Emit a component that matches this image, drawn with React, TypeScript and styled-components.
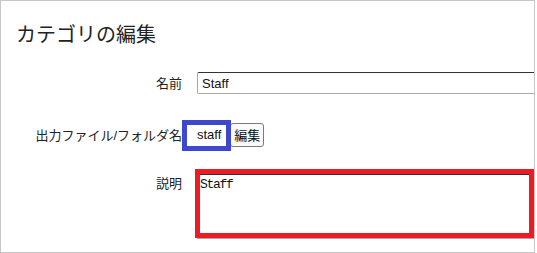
import React from "react";
import styled, { createGlobalStyle } from "styled-components";

const Global = createGlobalStyle`
  html, body { margin: 0; padding: 0; background: #fff; }
  body { font-family: "Liberation Sans", "Noto Sans CJK JP", sans-serif; }
`;

const Frame = styled.div`
  box-sizing: border-box;
  width: 535px;
  height: 253px;
  border: 1px solid #c6c6c6;
  overflow: hidden;
  padding-top: 21px;
  background: #fff;
`;

const Title = styled.h2`
  margin: 0 0 0 15px;
  font-family: "Noto Sans CJK JP", sans-serif;
  font-weight: 400;
  font-size: 20px;
  line-height: 24px;
  color: #222;
`;

const Row = styled.div<{ $top: number; $align?: string }>`
  display: grid;
  grid-template-columns: 181px 1fr;
  column-gap: 15px;
  align-items: ${(p) => p.$align ?? "center"};
  margin-top: ${(p) => p.$top}px;
`;

const Label = styled.div`
  text-align: right;
  font-family: "Liberation Sans", "Noto Sans CJK JP", sans-serif;
  font-size: 13px;
  line-height: 19px;
  color: #222;
  white-space: nowrap;
`;

const TextInput = styled.input`
  box-sizing: border-box;
  width: 380px;
  height: 22px;
  margin: 0;
  padding: 0 4px;
  font-family: "Liberation Sans", sans-serif;
  font-size: 13px;
  color: #111;
  border: 1px solid #a9a9a9;
  border-top-color: #333;
  border-radius: 2px 0 0 2px;
  outline: none;
`;

const Field = styled.div`
  display: flex;
  align-items: center;
  position: relative;
`;

const Value = styled.span`
  position: relative;
  font-family: "Liberation Sans", sans-serif;
  font-size: 13px;
  line-height: 24px;
  color: #111;
  margin-right: 9px;
`;

const Button = styled.button`
  box-sizing: border-box;
  height: 24px;
  padding: 0 3px;
  margin: 0;
  font-family: "Noto Sans CJK JP", sans-serif;
  font-size: 13px;
  line-height: 20px;
  color: #111;
  background: #fbfbfb;
  border: 1px solid #7a7a7a;
  border-radius: 3px;
`;

const Mark = styled.div<{ $color: string }>`
  position: absolute;
  box-sizing: border-box;
  border: 5px solid ${(p) => p.$color};
  pointer-events: none;
`;

const Area = styled.textarea`
  box-sizing: border-box;
  display: block;
  width: 380px;
  height: 65px;
  margin: 0;
  padding: 2px 2px;
  font-family: "Liberation Mono", monospace;
  font-size: 13px;
  letter-spacing: -1.3px;
  line-height: 15px;
  color: #111;
  border: 1px solid #a9a9a9;
  border-top-color: #333;
  resize: none;
  outline: none;
`;

export default function App() {
  return (
    <>
      <Global />
      <Frame>
        <Title>カテゴリの編集</Title>
        <Row $top={26}>
          <Label>名前</Label>
          <Field>
            <TextInput defaultValue="Staff" />
          </Field>
        </Row>
        <Row $top={29}>
          <Label>出力ファイル/フォルダ名</Label>
          <Field>
            <Value>staff</Value>
            <Button>編集</Button>
            <Mark $color="#3f48cc" style={{ left: -15, top: -3, width: 49, height: 31 }} />
          </Field>
        </Row>
        <Row $top={27} $align="start">
          <Label>説明</Label>
          <Field>
            <Area defaultValue="Staff" />
            <Mark $color="#ed1c24" style={{ left: -2, top: -5, width: 339, height: 69 }} />
          </Field>
        </Row>
      </Frame>
    </>
  );
}
